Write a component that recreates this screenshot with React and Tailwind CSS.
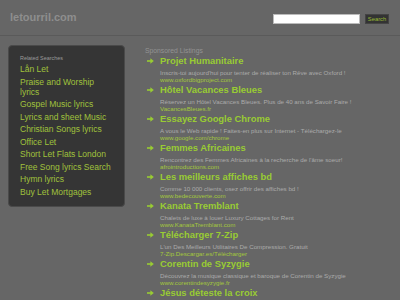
import React from "react";

const ads = [
  ["Projet Humanitaire", "Inscris-toi aujourd'hui pour tenter de réaliser ton Rêve avec Oxford !", "www.oxfordbigproject.com"],
  ["Hôtel Vacances Bleues", "Réservez un Hôtel Vacances Bleues. Plus de 40 ans de Savoir Faire !", "VacancesBleues.fr"],
  ["Essayez Google Chrome", "A vous le Web rapide ! Faites-en plus sur Internet - Téléchargez-le", "www.google.com/chrome"],
  ["Femmes Africaines", "Rencontrez des Femmes Africaines à la recherche de l'âme soeur!", "afrointroductions.com"],
  ["Les meilleurs affiches bd", "Comme 10 000 clients, osez offrir des affiches bd !", "www.bedecouverte.com"],
  ["Kanata Tremblant", "Chalets de luxe à louer Luxury Cottages for Rent", "www.KanataTremblant.com"],
  ["Télécharger 7-Zip", "L'un Des Meilleurs Utilitaires De Compression. Gratuit", "7-Zip.Descargar.es/Télécharger"],
  ["Corentin de Syzygie", "Découvrez la musique classique et baroque de Corentin de Syzygie", "www.corentindesyzygie.fr"],
  ["Jésus déteste la croix", null, null],
];

const links = [
  "Lån Let",
  "Praise and Worship lyrics",
  "Gospel Music lyrics",
  "Lyrics and sheet Music",
  "Christian Songs lyrics",
  "Office Let",
  "Short Let Flats London",
  "Free Song lyrics Search",
  "Hymn lyrics",
  "Buy Let Mortgages",
];

function Arrow() {
  return (
    <svg width="7" height="6" viewBox="0 0 7 6" className="shrink-0">
      <path d="M0 3H4.2" stroke="#99cc33" strokeWidth="1.6" />
      <path d="M3.4 0.2L6.8 3L3.4 5.8Z" fill="#99cc33" />
    </svg>
  );
}

export default function App() {
  return (
    <div
      className="w-[400px] h-[300px] overflow-hidden bg-[#666666]"
      style={{ fontFamily: '"Liberation Sans", Arial, sans-serif' }}
    >
      <div className="h-[36px] border-b border-[#5a5a5a] flex items-start justify-between pl-[10px] pr-[11px]">
        <div className="mt-[11px] text-[11px] leading-[12px] font-bold text-[#8e8e8e]">letourril.com</div>
        <div className="mt-[14px] flex items-center gap-[5px]">
          <div className="w-[87px] h-[10px] bg-white border border-[#bbbbbb]" />
          <div className="w-[24px] h-[10px] bg-[#333333] border border-[#444444] flex items-center justify-center text-[5.8px] leading-[6px] text-[#99bb33]">
            Search
          </div>
        </div>
      </div>
      <div className="flex items-start">
        <div className="ml-[8px] mt-[9px] w-[117px] h-[162px] bg-[#353535] border border-[#4a4a4a] rounded-[4px] pl-[11px] pr-[10px] pt-[8px]">
          <div className="text-[5.4px] leading-[8px] text-[#9a9a9a]">Related Searches</div>
          <div className="mt-[2px] flex flex-col">
            {links.map((l) => (
              <div key={l} className="text-[8.5px] leading-[10px] mb-[2.5px] text-[#a0c23c]">
                {l}
              </div>
            ))}
          </div>
        </div>
        <div className="ml-[20px] mt-[11px] flex-1">
          <div className="text-[6.8px] leading-[7px] text-[#939393]">Sponsored Listings</div>
          <div className="mt-[1px] flex flex-col">
            {ads.map(([t, d, u]) => (
              <div key={t} className="pb-[1.5px]">
                <div className="flex items-center gap-[6px] h-[12px] pl-[2px]">
                  <Arrow />
                  <span className="text-[9.4px] leading-[12px] font-bold text-[#99cc33] whitespace-nowrap">{t}</span>
                </div>
                {d && (
                  <div className="pl-[15px] mt-[1.5px] text-[6.2px] leading-[7px] text-[#ababab] whitespace-nowrap">{d}</div>
                )}
                {u && (
                  <div className="pl-[15px] text-[6.2px] leading-[7px] text-[#a4c83c] whitespace-nowrap">{u}</div>
                )}
              </div>
            ))}
          </div>
        </div>
      </div>
    </div>
  );
}
